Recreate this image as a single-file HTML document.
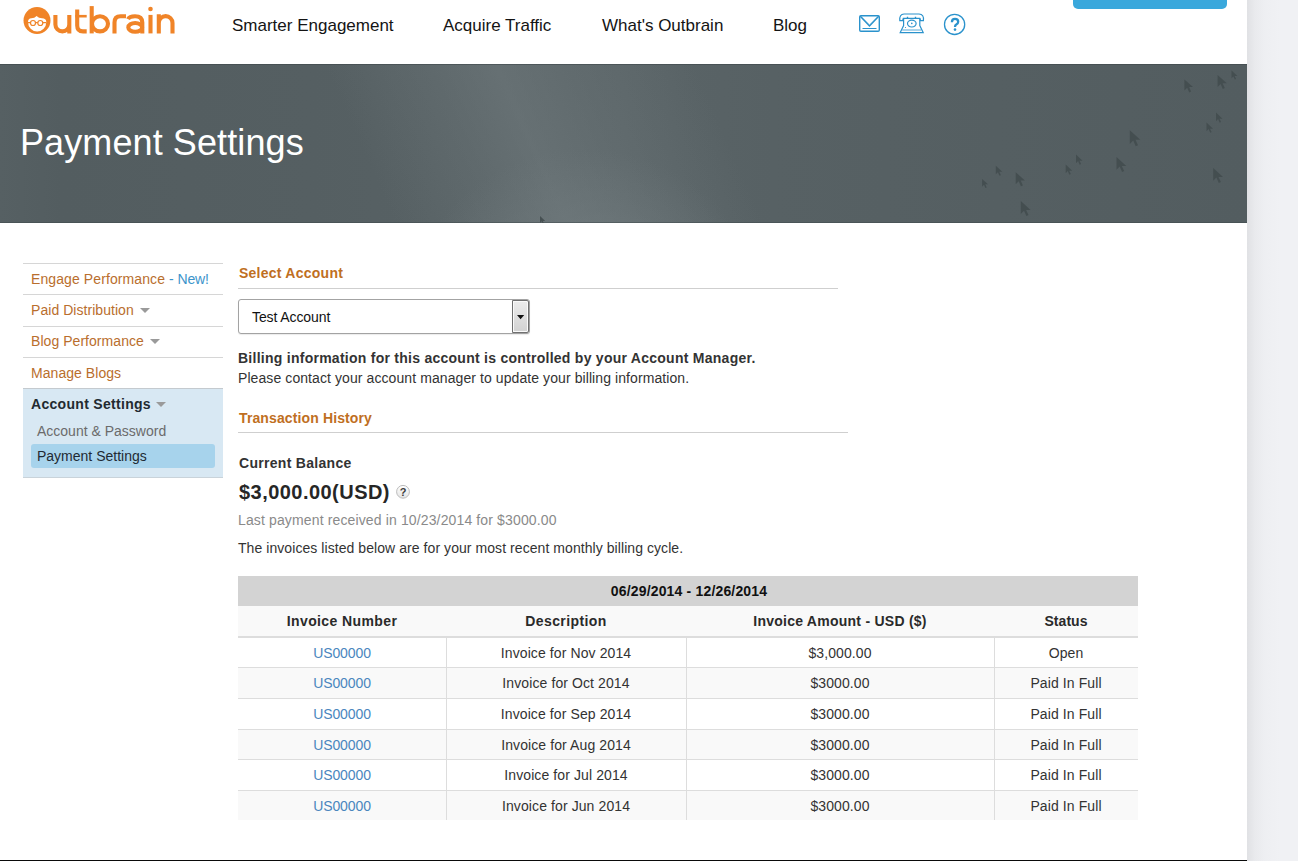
<!DOCTYPE html>
<html><head><meta charset="utf-8">
<style>
*{margin:0;padding:0;box-sizing:border-box}
html,body{width:1298px;height:861px;overflow:hidden;background:linear-gradient(90deg,#fff 0,#fff 1247px,#e0e1e4 1247px,#e9eaed 1255px,#eeeff2 1265px,#f0f1f4 1280px,#f0f1f4 100%);font-family:"Liberation Sans",sans-serif}
#page{position:absolute;left:0;top:0;width:1247px;height:861px;background:#fff}
#bottomline{position:absolute;left:0;top:860px;width:1247px;height:1px;background:#0a0a0a}
.a{position:absolute;white-space:nowrap;line-height:1}
.nav{font-size:17px;color:#141414}
#band{position:absolute;left:0;top:64px;width:1247px;height:159px;overflow:hidden;
 background:radial-gradient(ellipse 170px 150px at 585px 235px,rgba(128,138,141,0.7) 0%,rgba(118,128,131,0.4) 45%,rgba(100,110,113,0) 100%),linear-gradient(66deg,rgba(110,120,123,0) 30%,rgba(114,124,127,0.3) 38%,rgba(116,126,129,0.5) 43%,rgba(114,124,127,0.3) 49%,rgba(110,120,123,0) 58%),linear-gradient(90deg,#566063 0%,#535d60 5%,#555f62 25%,#586265 40%,#5a6467 50%,#576164 62%,#555f62 80%,#535d60 100%)}
#title{font-size:36px;color:#fff}
.side{font-size:14px;color:#b96e2d}
.sline{position:absolute;left:23px;width:200px;height:1px;background:#d6d6d6}
.tri{position:absolute;width:0;height:0;border-left:5px solid transparent;border-right:5px solid transparent;border-top:5px solid #9a9a9a}
.h2{font-size:14px;font-weight:bold;color:#bf6f1f;letter-spacing:0.25px}
.hl{position:absolute;height:1px;background:#cfcfcf}
.txt{font-size:14px;color:#333}
.tc{text-align:center;line-height:16px;font-size:14px}
.th{font-weight:bold;color:#2a2a2a;letter-spacing:0.25px}
.td{color:#333;letter-spacing:0.1px}
.lk{color:#4a86be;letter-spacing:-0.1px}
</style></head><body>
<div id="page">
 <!-- logo -->
 <svg class="a" style="left:0;top:0" width="200" height="45" viewBox="0 0 200 45">
  <g fill="#f08428">
   <circle cx="37" cy="20.5" r="13.5"/>
  </g>
  <path d="M28,22 Q28.2,18.2 31.5,18.3 Q34.5,18.3 36.6,16 Q38.8,18.3 42,18.3 Q46.2,18.3 46.3,22 A9.15,9.6 0 0 1 28,22 Z" fill="#fff"/>
  <g fill="none" stroke="#f08428" stroke-width="1.2">
   <circle cx="33" cy="23" r="2.5"/><circle cx="40.3" cy="23" r="2.5"/>
   <path d="M28,22.6 H30.5 M35.5,22.6 H37.8 M42.8,22.6 H46.3"/>
  </g>
  <g fill="none" stroke="#f08428" stroke-width="4.1">
   <path d="M55.4,14.9 V24.4 A6.95,7 0 0 0 69.3,24.4 M69.3,14.9 V33.4"/>
   <path d="M77.2,9.4 V25.5 Q77.2,31.4 83,31.4 H86.7"/>
   <path d="M75.3,16.2 H86.7" stroke-width="2.6"/>
   <path d="M91.7,6.1 V33.4"/>
   <ellipse cx="100" cy="23.8" rx="8" ry="7.6"/>
   <path d="M114.5,33.4 V22.5 Q114.5,16.2 120.5,16.2 H126"/>
   <path d="M128,19.2 Q129.5,16.2 135,16.2 Q142.3,16.2 142.3,22.5 V33.4"/>
   <ellipse cx="135.2" cy="27.4" rx="6.9" ry="4.4"/>
   <path d="M150.5,14.9 V33.4"/>
   <path d="M158.8,14.2 V33.4 M158.8,23 A6.85,6.85 0 0 1 172.5,23 V33.4"/>
  </g>
  <circle cx="150.5" cy="9" r="2.3" fill="#f08428"/>
 </svg>
 <div class="a nav" style="left:232px;top:17px">Smarter Engagement</div>
 <div class="a nav" style="left:443px;top:17px">Acquire Traffic</div>
 <div class="a nav" style="left:602px;top:17px">What's Outbrain</div>
 <div class="a nav" style="left:773px;top:17px">Blog</div>
 <!-- icons -->
 <svg class="a" style="left:850px;top:5px" width="130" height="40" viewBox="850 5 130 40">
  <g fill="none" stroke="#2a92cc" stroke-width="1.4">
   <rect x="859.7" y="15.7" width="19.6" height="15.6" rx="1.2"/>
   <path d="M860.3,16.3 L869.5,26 L878.7,16.3"/>
   <path d="M862,17.2 L869.5,24.6 L877,17.2" stroke-width="0.6" stroke-opacity="0.6"/>
   <path d="M862.5,28.5 H876.5" stroke-width="1"/>
  </g>
  <g fill="none" stroke="#2a92cc" stroke-width="1.2">
   <path d="M899.8,20.6 Q899.2,14.2 904,14 H919 Q924.2,14.2 923.4,20.6 H920.6 L919.8,18.3 H903.3 L902.6,20.6 Z"/>
   <path d="M903.6,18.3 V25.5 L900.2,32.6 H923.2 L919.8,25.5 V18.3"/>
   <ellipse cx="911.8" cy="23.6" rx="4.3" ry="3.4"/>
   <path d="M902.2,30 H921.2" stroke-width="0.8"/>
   <path d="M907.5,18.3 V16.8 M915.5,18.3 V16.8" stroke-width="1.4"/>
  </g>
  <circle cx="911.8" cy="23.4" r="0.8" fill="#2a92cc"/>
  <circle cx="905.5" cy="27.5" r="0.6" fill="#2a92cc"/>
  <circle cx="954.6" cy="24.4" r="10.1" fill="none" stroke="#2a92cc" stroke-width="1.3"/>
  <path d="M951.9,22.2 Q951.9,18.9 955,18.9 Q958.2,18.9 958.2,21.8 Q958.2,23.5 956.3,24.5 Q955,25.2 955,26.9" fill="none" stroke="#2a92cc" stroke-width="2.3"/>
  <circle cx="955" cy="29.6" r="1.3" fill="#2a92cc"/>
 </svg>
 <div class="a" style="left:1073px;top:-6px;width:154px;height:15px;border-radius:5px;background:#3aa8dc"></div>

 <div id="band"></div>
 <div class="a" style="left:0;top:64px;width:1247px;height:1px;background:rgba(60,70,73,0.55)"></div>
 <div class="a" style="left:0;top:222px;width:1247px;height:1px;background:rgba(60,70,73,0.45)"></div>
 <svg class="a" style="left:0;top:64px" width="1247" height="159" viewBox="0 64 1247 159"><path fill="#434c4f" fill-opacity="0.9" d="M1184.4,79.5 l0,11.1 l2.8,-2.8 l2.0,4.6 l1.9,-0.8 l-2.0,-4.5 l3.9,0 z M1217.6,75.0 l0,12.0 l3.0,-3.0 l2.2,5.0 l2.0,-0.9 l-2.2,-4.8 l4.2,0 z M1231.5,70.6 l0,7.7 l1.9,-1.9 l1.4,3.2 l1.3,-0.6 l-1.4,-3.1 l2.7,0 z M1216.0,112.6 l0,8.6 l2.1,-2.1 l1.6,3.6 l1.4,-0.6 l-1.6,-3.4 l3.0,0 z M1206.5,122.6 l0,8.6 l2.1,-2.1 l1.6,3.6 l1.4,-0.6 l-1.6,-3.4 l3.0,0 z M1129.8,130.3 l0,13.7 l3.4,-3.4 l2.5,5.7 l2.3,-1.0 l-2.5,-5.5 l4.8,0 z M1116.5,156.9 l0,12.9 l3.2,-3.2 l2.4,5.4 l2.1,-1.0 l-2.4,-5.1 l4.5,0 z M1076.0,154.6 l0,8.6 l2.1,-2.1 l1.6,3.6 l1.4,-0.6 l-1.6,-3.4 l3.0,0 z M1065.7,164.6 l0,8.6 l2.1,-2.1 l1.6,3.6 l1.4,-0.6 l-1.6,-3.4 l3.0,0 z M1213.2,167.9 l0,12.9 l3.2,-3.2 l2.4,5.4 l2.1,-1.0 l-2.4,-5.1 l4.5,0 z M995.8,165.7 l0,8.6 l2.1,-2.1 l1.6,3.6 l1.4,-0.6 l-1.6,-3.4 l3.0,0 z M982.1,179.0 l0,7.7 l1.9,-1.9 l1.4,3.2 l1.3,-0.6 l-1.4,-3.1 l2.7,0 z M1015.7,172.3 l0,12.0 l3.0,-3.0 l2.2,5.0 l2.0,-0.9 l-2.2,-4.8 l4.2,0 z M1020.8,201.0 l0,12.9 l3.2,-3.2 l2.4,5.4 l2.1,-1.0 l-2.4,-5.1 l4.5,0 z M540.0,216.0 l0,6.9 l1.7,-1.7 l1.3,2.9 l1.1,-0.5 l-1.3,-2.7 l2.4,0 z"/></svg>
 <div class="a" id="title" style="left:20px;top:125px;letter-spacing:0.1px">Payment Settings</div>

 <!-- sidebar -->
 <div class="sline" style="top:263px"></div>
 <div class="a side" style="left:31px;top:272px;letter-spacing:0.1px">Engage Performance <span style="color:#3c94cb;letter-spacing:-0.12px">- New!</span></div>
 <div class="sline" style="top:294px"></div>
 <div class="a side" style="left:31px;top:303px;letter-spacing:0.05px">Paid Distribution</div>
 <div class="tri" style="left:140px;top:308px"></div>
 <div class="sline" style="top:326px"></div>
 <div class="a side" style="left:31px;top:334px;letter-spacing:0.05px">Blog Performance</div>
 <div class="tri" style="left:150px;top:339px"></div>
 <div class="sline" style="top:357px"></div>
 <div class="a side" style="left:31px;top:366px;letter-spacing:0.05px">Manage Blogs</div>
 <div class="a" style="left:23px;top:388px;width:200px;height:90px;background:#d8e8f3;border-top:1px solid #c4cacf;border-bottom:1px solid #c9d3da"></div>
 <div class="a side" style="left:31px;top:397px;font-weight:bold;color:#222a30;letter-spacing:0.3px">Account Settings</div>
 <div class="tri" style="left:156px;top:402px"></div>
 <div class="a side" style="left:37px;top:424px;color:#6b6b6b">Account &amp; Password</div>
 <div class="a" style="left:31px;top:444px;width:184px;height:24px;border-radius:3px;background:#a7d3ec"></div>
 <div class="a side" style="left:37px;top:449px;color:#1f2a33">Payment Settings</div>

 <!-- content -->
 <div class="a h2" style="left:239px;top:266px">Select Account</div>
 <div class="hl" style="left:238px;top:288px;width:600px"></div>
 <div class="a" style="left:238px;top:299px;width:292px;height:35px;border:1px solid #a3a3a3;border-radius:3px;background:#fff;box-shadow:0 1px 1px rgba(0,0,0,0.08)"></div>
 <div class="a" style="left:512px;top:300px;width:17px;height:33px;border:1px solid #707070;border-radius:0 2px 2px 0;box-shadow:inset 0 0 0 1px #fafafa;background:linear-gradient(#ececec,#d2d2d2)"></div>
 <svg class="a" style="left:514px;top:312px" width="12" height="10" viewBox="514 312 12 10"><path d="M517,315 H524.2 L520.6,319.2 Z" fill="#111"/></svg>
 <div class="a txt" style="left:252px;top:310px;color:#111;letter-spacing:-0.1px">Test Account</div>

 <div class="a txt" style="left:238px;top:351px;font-weight:bold;letter-spacing:0.26px">Billing information for this account is controlled by your Account Manager.</div>
 <div class="a txt" style="left:238px;top:371px;letter-spacing:0.085px">Please contact your account manager to update your billing information.</div>

 <div class="a h2" style="left:239px;top:411px;letter-spacing:0.12px">Transaction History</div>
 <div class="hl" style="left:238px;top:432px;width:610px"></div>

 <div class="a txt" style="left:239px;top:456px;font-weight:bold;letter-spacing:0.30px">Current Balance</div>
 <div class="a" style="left:239px;top:482px;font-size:20px;font-weight:bold;color:#262626;letter-spacing:0.46px">$3,000.00(USD)</div>
 <svg class="a" style="left:394px;top:483px" width="18" height="18" viewBox="394 483 18 18"><defs><linearGradient id="qg" x1="0" y1="0" x2="0" y2="1"><stop offset="0" stop-color="#ffffff"/><stop offset="1" stop-color="#e4e4e4"/></linearGradient></defs><circle cx="403" cy="491.8" r="6.4" fill="url(#qg)" stroke="#bcbcbc" stroke-width="1"/><text x="403.2" y="495.9" text-anchor="middle" font-family="Liberation Sans" font-weight="bold" font-size="11" fill="#3c3c3c">?</text></svg>
 <div class="a txt" style="left:238px;top:513px;color:#8a8a8a;letter-spacing:0.135px">Last payment received in 10/23/2014 for $3000.00</div>
 <div class="a txt" style="left:238px;top:541px;letter-spacing:0.065px">The invoices listed below are for your most recent monthly billing cycle.</div>

 <div class="a" style="left:238px;top:576px;width:900px;height:30px;background:#d3d3d3"></div>
 <div class="a tc th" style="left:238px;top:583px;width:900px;color:#111;letter-spacing:0.17px;padding-left:2px">06/29/2014 - 12/26/2014</div>
 <div class="a" style="left:238px;top:606px;width:900px;height:30px;background:#f9f9f9"></div>
 <div class="a" style="left:238px;top:636px;width:900px;height:2px;background:#dddddd"></div>
 <div class="a tc th" style="left:238px;top:613px;width:208px;letter-spacing:0.39px">Invoice Number</div>
 <div class="a tc th" style="left:446px;top:613px;width:240px;letter-spacing:0.4px">Description</div>
 <div class="a tc th" style="left:686px;top:613px;width:308px">Invoice Amount - USD ($)</div>
 <div class="a tc th" style="left:994px;top:613px;width:144px;letter-spacing:0.05px">Status</div>
 <div class="a" style="left:238px;top:638px;width:900px;height:29px;background:#ffffff"></div>
 <div class="a" style="left:238px;top:667px;width:900px;height:1px;background:#dddddd"></div>
 <div class="a tc td lk" style="left:238px;top:645px;width:208px">US00000</div>
 <div class="a tc td" style="left:446px;top:645px;width:240px">Invoice for Nov 2014</div>
 <div class="a tc td" style="left:686px;top:645px;width:308px">$3,000.00</div>
 <div class="a tc td" style="left:994px;top:645px;width:144px">Open</div>
 <div class="a" style="left:238px;top:668px;width:900px;height:30px;background:#f9f9f9"></div>
 <div class="a" style="left:238px;top:698px;width:900px;height:1px;background:#dddddd"></div>
 <div class="a tc td lk" style="left:238px;top:675px;width:208px">US00000</div>
 <div class="a tc td" style="left:446px;top:675px;width:240px">Invoice for Oct 2014</div>
 <div class="a tc td" style="left:686px;top:675px;width:308px">$3000.00</div>
 <div class="a tc td" style="left:994px;top:675px;width:144px">Paid In Full</div>
 <div class="a" style="left:238px;top:699px;width:900px;height:30px;background:#ffffff"></div>
 <div class="a" style="left:238px;top:729px;width:900px;height:1px;background:#dddddd"></div>
 <div class="a tc td lk" style="left:238px;top:706px;width:208px">US00000</div>
 <div class="a tc td" style="left:446px;top:706px;width:240px">Invoice for Sep 2014</div>
 <div class="a tc td" style="left:686px;top:706px;width:308px">$3000.00</div>
 <div class="a tc td" style="left:994px;top:706px;width:144px">Paid In Full</div>
 <div class="a" style="left:238px;top:730px;width:900px;height:29px;background:#f9f9f9"></div>
 <div class="a" style="left:238px;top:759px;width:900px;height:1px;background:#dddddd"></div>
 <div class="a tc td lk" style="left:238px;top:737px;width:208px">US00000</div>
 <div class="a tc td" style="left:446px;top:737px;width:240px">Invoice for Aug 2014</div>
 <div class="a tc td" style="left:686px;top:737px;width:308px">$3000.00</div>
 <div class="a tc td" style="left:994px;top:737px;width:144px">Paid In Full</div>
 <div class="a" style="left:238px;top:760px;width:900px;height:30px;background:#ffffff"></div>
 <div class="a" style="left:238px;top:790px;width:900px;height:1px;background:#dddddd"></div>
 <div class="a tc td lk" style="left:238px;top:767px;width:208px">US00000</div>
 <div class="a tc td" style="left:446px;top:767px;width:240px">Invoice for Jul 2014</div>
 <div class="a tc td" style="left:686px;top:767px;width:308px">$3000.00</div>
 <div class="a tc td" style="left:994px;top:767px;width:144px">Paid In Full</div>
 <div class="a" style="left:238px;top:791px;width:900px;height:29px;background:#f9f9f9"></div>
 <div class="a tc td lk" style="left:238px;top:798px;width:208px">US00000</div>
 <div class="a tc td" style="left:446px;top:798px;width:240px">Invoice for Jun 2014</div>
 <div class="a tc td" style="left:686px;top:798px;width:308px">$3000.00</div>
 <div class="a tc td" style="left:994px;top:798px;width:144px">Paid In Full</div>
 <div class="a" style="left:446px;top:638px;width:1px;height:182px;background:#dddddd"></div>
 <div class="a" style="left:686px;top:638px;width:1px;height:182px;background:#dddddd"></div>
 <div class="a" style="left:994px;top:638px;width:1px;height:182px;background:#dddddd"></div>
</div>
<div id="bottomline"></div>
</body></html>
